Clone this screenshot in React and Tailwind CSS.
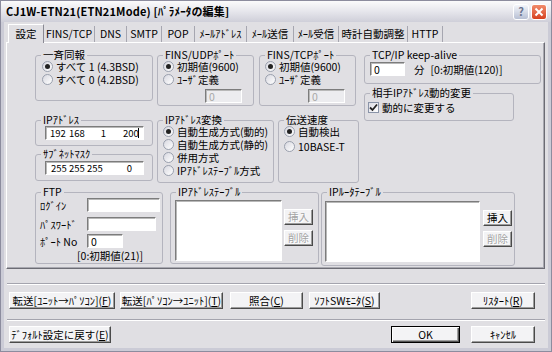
import React from "react";

const Group = ({ title, className = "", children }) => (
  <div className={`relative shrink-0 border border-[#b4b4be] rounded-[3px] ${className}`}>
    <span className="absolute left-[5px] -top-[7px] bg-[#e0dfe3] px-[2px] leading-[11px] whitespace-nowrap">
      {title}
    </span>
    {children}
  </div>
);

const Radio = ({ checked, label, className = "" }) => (
  <div className={`flex items-center h-[13px] ${className}`}>
    <span className="w-[11px] h-[11px] shrink-0 rounded-full border border-[#9aa0ae] bg-gradient-to-br from-[#d8d8e0] to-white flex items-center justify-center">
      {checked && <span className="w-[5px] h-[5px] rounded-full bg-[#222]" />}
    </span>
    <span className="ml-[3px] whitespace-nowrap leading-[11px]">{label}</span>
  </div>
);

const Field = ({ className = "", disabled, children }) => (
  <div
    className={`shrink-0 flex items-center pl-[3px] leading-[11px] border border-t-[#7c7c7c] border-l-[#7c7c7c] border-r-white border-b-white shadow-[inset_1px_1px_0_#b8b8b8] ${
      disabled ? "bg-[#ececef] text-[#a8a8a8]" : "bg-white"
    } ${className}`}
  >
    {children}
  </div>
);

const Btn = ({ className = "", disabled, isDefault, children }) => (
  <button
    type="button"
    className={`shrink-0 flex items-center justify-center whitespace-nowrap leading-[12px] bg-[#f3f3f5] ${
      isDefault
        ? "border border-black shadow-[inset_1px_1px_0_#fff,inset_-1px_-1px_0_#555,inset_-2px_-2px_0_#a0a0a0]"
        : "border border-t-white border-l-white border-r-[#4a4a4a] border-b-[#4a4a4a] shadow-[inset_-1px_-1px_0_#9c9c9c]"
    } ${disabled ? "text-[#a4a4a4] [text-shadow:1px_1px_0_#fff]" : "text-black"} ${className}`}
  >
    {children}
  </button>
);

const tabs = [
  ["設定", "w-[36px]"],
  ["FINS/TCP", "w-[51px]"],
  ["DNS", "w-[32px]"],
  ["SMTP", "w-[35px]"],
  ["POP", "w-[33px]"],
  ["ﾒｰﾙｱﾄﾞﾚｽ", "w-[52px]"],
  ["ﾒｰﾙ送信", "w-[47px]"],
  ["ﾒｰﾙ受信", "w-[45px]"],
  ["時計自動調整", "w-[69px]"],
  ["HTTP", "w-[35px]"],
];

export default function App() {
  return (
    <div className="w-[552px] h-[352px] font-['Noto_Sans_CJK_JP','Noto_Sans',sans-serif] text-[10.5px] text-black bg-[#8c8c9e] p-px flex flex-col">
      {/* title bar */}
      <div className="h-[21px] shrink-0 flex items-center bg-gradient-to-b from-[#fbfbfc] via-[#e6e6ec] to-[#cfcfd9] pl-[5px] pr-[4px]">
        <span className="font-bold text-[11px] tracking-[0.15px] whitespace-nowrap">
          CJ1W-ETN21(ETN21Mode) [ﾊﾟﾗﾒｰﾀの編集]
        </span>
        <div className="ml-auto flex items-center gap-[2px]">
          <div className="w-[16px] h-[16px] rounded-[3px] border border-white bg-gradient-to-b from-[#f4f6fb] to-[#b8c0d4] flex items-center justify-center text-[11px] font-bold text-[#6a7490] leading-none">
            ?
          </div>
          <div className="w-[16px] h-[16px] rounded-[3px] border border-white bg-gradient-to-b from-[#f08a6a] to-[#d6401e] flex items-center justify-center">
            <svg width="10" height="10" viewBox="0 0 10 10">
              <path d="M1.5 1.5 L8.5 8.5 M8.5 1.5 L1.5 8.5" stroke="#fff" strokeWidth="2" />
            </svg>
          </div>
        </div>
      </div>

      {/* client */}
      <div className="flex-1 bg-[#e0dfe3] border-[3px] border-t-0 border-[#cbcbd6] flex flex-col">
        {/* tab strip */}
        <div className="h-[20px] shrink-0 flex items-end pl-[4px]">
          {tabs.map(([label, w], i) =>
            i === 0 ? (
              <div
                key={label}
                className={`${w} h-[19px] -mb-px relative z-10 bg-[#e0dfe3] border border-b-0 border-t-white border-l-white border-r-[#8a8a94] flex items-center justify-center pb-[1px]`}
              >
                {label}
              </div>
            ) : (
              <div
                key={label}
                className={`${w} h-[16px] border-r border-[#a6a6b0] flex items-center justify-center whitespace-nowrap`}
              >
                {label}
              </div>
            )
          )}
        </div>

        {/* panel */}
        <div className="ml-[2px] w-[539px] h-[227px] shrink-0 border border-t-white border-l-white border-r-[#6c6c74] border-b-[#6c6c74] shadow-[inset_-1px_-1px_0_#a8a8b0] pl-[28px] pt-[12px] flex flex-col">
          <div className="flex items-start">
            {/* column A */}
            <div className="flex flex-col">
              <Group title="一斉同報" className="w-[118px] h-[46px] pt-[4px] pl-[6px]">
                <Radio checked label="すべて 1 (4.3BSD)" />
                <Radio label="すべて 0 (4.2BSD)" />
              </Group>
              <Group title="IPｱﾄﾞﾚｽ" className="mt-[19px] w-[118px] h-[26px] pt-[5px] pl-[9px]">
                <Field className="w-[99px] h-[14px] text-[9.5px]">
                  <span className="ml-[1px] w-[15px] text-center">192</span>
                  <span className="ml-[4px] w-[15px] text-center">168</span>
                  <span className="ml-[12px] w-[15px] text-center">1</span>
                  <span className="ml-[12px] w-[15px] text-center">200</span>
                  <span className="w-px h-[10px] bg-black" />
                </Field>
              </Group>
              <Group title="ｻﾌﾞﾈｯﾄﾏｽｸ" className="mt-[8px] w-[118px] h-[27px] pt-[6px] pl-[9px]">
                <Field className="w-[99px] h-[14px] text-[9.5px]">
                  <span className="ml-[2px] w-[15px] text-center">255</span>
                  <span className="ml-[3px] w-[15px] text-center">255</span>
                  <span className="ml-[3px] w-[15px] text-center">255</span>
                  <span className="ml-[20px] w-[15px] text-center">0</span>
                </Field>
              </Group>
            </div>

            {/* column B/C */}
            <div className="ml-[4px] flex flex-col">
              <div className="flex">
                <Group title="FINS/UDPﾎﾟｰﾄ" className="w-[97px] h-[51px] pt-[4px] pl-[5px]">
                  <Radio checked label="初期値(9600)" />
                  <Radio label="ﾕｰｻﾞ定義" />
                  <Field disabled className="mt-[3px] ml-[42px] w-[37px] h-[14px]">0</Field>
                </Group>
                <Group title="FINS/TCPﾎﾟｰﾄ" className="ml-[5px] w-[97px] h-[51px] pt-[4px] pl-[5px]">
                  <Radio checked label="初期値(9600)" />
                  <Radio label="ﾕｰｻﾞ定義" />
                  <Field disabled className="mt-[3px] ml-[43px] w-[37px] h-[14px]">0</Field>
                </Group>
              </div>
              <div className="mt-[14px] flex">
                <Group title="IPｱﾄﾞﾚｽ変換" className="w-[117px] h-[63px] pt-[4px] pl-[5px]">
                  <Radio checked label="自動生成方式(動的)" className="h-[12px]" />
                  <Radio label="自動生成方式(静的)" className="h-[12px]" />
                  <Radio label="併用方式" className="h-[12px]" />
                  <Radio label="IPｱﾄﾞﾚｽﾃｰﾌﾞﾙ方式" className="h-[12px]" />
                </Group>
                <Group title="伝送速度" className="ml-[4px] w-[81px] h-[63px] pt-[4px] pl-[5px]">
                  <Radio checked label="自動検出" />
                  <Radio label="10BASE-T" className="mt-[2px]" />
                </Group>
              </div>
            </div>

            {/* column D */}
            <div className="ml-[5px] flex flex-col">
              <Group title="TCP/IP keep-alive" className="w-[177px] h-[29px] pt-[6px] pl-[5px]">
                <div className="flex items-center">
                  <Field className="w-[35px] h-[14px]">0</Field>
                  <span className="ml-[9px] leading-[11px]">分</span>
                  <span className="ml-[6px] whitespace-nowrap leading-[11px]">[0:初期値(120)]</span>
                </div>
              </Group>
              <Group title="相手IPｱﾄﾞﾚｽ動的変更" className="mt-[9px] w-[150px] h-[28px] pt-[7px] pl-[3px]">
                <div className="flex items-center h-[13px]">
                  <span className="w-[11px] h-[11px] shrink-0 border border-[#8a94a8] bg-gradient-to-br from-[#dcdce4] to-white flex items-center justify-center">
                    <svg width="9" height="9" viewBox="0 0 9 9">
                      <path d="M1 4.5 L3.5 7 L8 1.5" stroke="#222" strokeWidth="1.8" fill="none" />
                    </svg>
                  </span>
                  <span className="ml-[3px] whitespace-nowrap leading-[11px]">動的に変更する</span>
                </div>
              </Group>
            </div>
          </div>

          {/* bottom row */}
          <div className="mt-[9px] flex items-start">
            <Group title="FTP" className="w-[128px] h-[72px] pt-[5px] pl-[4px]">
              <div className="flex items-center">
                <span className="w-[47px] leading-[11px]">ﾛｸﾞｲﾝ</span>
                <Field className="w-[73px] h-[14px]" />
              </div>
              <div className="mt-[5px] flex items-center">
                <span className="w-[47px] leading-[11px]">ﾊﾟｽﾜｰﾄﾞ</span>
                <Field className="w-[69px] h-[14px]" />
              </div>
              <div className="mt-[3px] flex items-center">
                <span className="w-[47px] leading-[11px]">ﾎﾟｰﾄ No</span>
                <Field className="w-[36px] h-[14px]">0</Field>
              </div>
              <div className="mt-[2px] ml-[37px] leading-[11px] whitespace-nowrap">[0:初期値(21)]</div>
            </Group>
            <Group title="IPｱﾄﾞﾚｽﾃｰﾌﾞﾙ" className="ml-[7px] w-[149px] h-[72px] pt-[7px] pl-[4px] flex items-start">
              <Field className="w-[107px] h-[61px]" />
              <div className="ml-[2px] mt-[9px] flex flex-col">
                <Btn disabled className="w-[29px] h-[16px]">挿入</Btn>
                <Btn disabled className="mt-[5px] w-[29px] h-[16px]">削除</Btn>
              </div>
            </Group>
            <Group title="IPﾙｰﾀﾃｰﾌﾞﾙ" className="ml-[2px] w-[194px] h-[74px] pt-[8px] pl-[3px] flex items-start">
              <Field className="w-[155px] h-[61px]" />
              <div className="ml-[3px] mt-[9px] flex flex-col">
                <Btn className="w-[29px] h-[16px]">挿入</Btn>
                <Btn disabled className="mt-[5px] w-[29px] h-[16px]">削除</Btn>
              </div>
            </Group>
          </div>
        </div>

        {/* separator */}
        <div className="mt-[14px] ml-[3px] w-[538px] h-[2px] shrink-0 border-t border-[#a4a4ae] border-b border-b-white" />

        {/* row 1 buttons */}
        <div className="mt-[7px] flex h-[17px] shrink-0">
          <Btn className="ml-[5px] w-[106px] h-[17px]">
            転送[ﾕﾆｯﾄ→ﾊﾟｿｺﾝ](<u>F</u>)
          </Btn>
          <Btn className="ml-[5px] w-[103px] h-[17px]">
            転送[ﾊﾟｿｺﾝ→ﾕﾆｯﾄ](<u>T</u>)
          </Btn>
          <Btn className="ml-[7px] w-[73px] h-[17px]">
            照合(<u>C</u>)
          </Btn>
          <Btn className="ml-[6px] w-[71px] h-[17px]">
            ｿﾌﾄSWﾓﾆﾀ(<u>S</u>)
          </Btn>
          <Btn className="ml-[91px] w-[64px] h-[17px]">
            ﾘｽﾀｰﾄ(<u>R</u>)
          </Btn>
        </div>

        {/* separator */}
        <div className="mt-[10px] ml-[3px] w-[538px] h-[2px] shrink-0 border-t border-[#a4a4ae] border-b border-b-white" />

        {/* row 2 buttons */}
        <div className="mt-[5px] flex h-[17px] shrink-0">
          <Btn className="ml-[5px] w-[102px] h-[17px]">
            ﾃﾞﾌｫﾙﾄ設定に戻す(<u>E</u>)
          </Btn>
          <Btn isDefault className="ml-[280px] w-[69px] h-[17px]">
            OK
          </Btn>
          <Btn className="ml-[11px] w-[64px] h-[17px]">ｷｬﾝｾﾙ</Btn>
        </div>
      </div>
    </div>
  );
}
